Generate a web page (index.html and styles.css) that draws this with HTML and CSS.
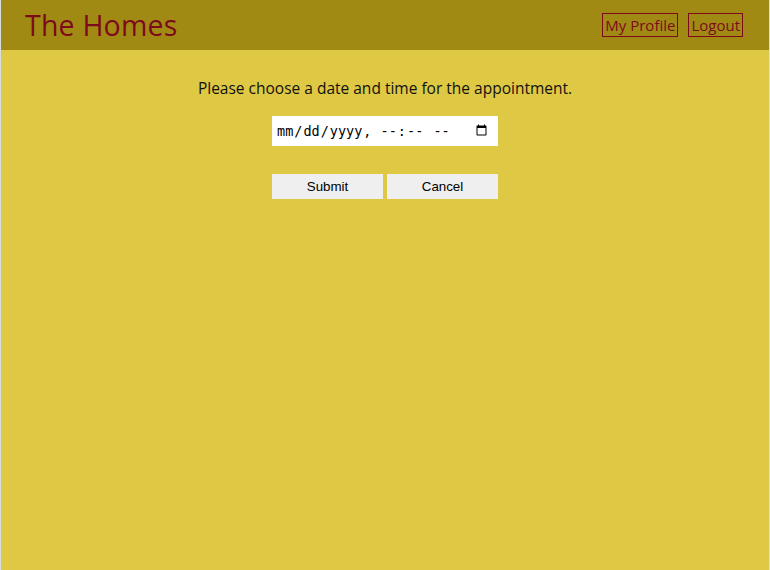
FILE: index.html
```html
<!DOCTYPE html>
<html>
<head>
<meta charset="utf-8">
<link rel="stylesheet" href="styles.css">
</head>
<body>
<div class="page">
  <header class="topbar">
    <h1 class="brand">The Homes</h1>
    <nav class="nav">
      <a class="nav-link" href="#">My Profile</a>
      <a class="nav-link" href="#">Logout</a>
    </nav>
  </header>
  <main class="content">
    <p class="prompt">Please choose a date and time for the appointment.</p>
    <form class="form">
      <input class="dt" type="datetime-local">
      <div class="actions">
        <button class="btn" type="button">Submit</button>
        <button class="btn" type="button">Cancel</button>
      </div>
    </form>
  </main>
</div>
</body>
</html>
```
FILE: styles.css
```css
html, body {
  margin: 0;
  padding: 0;
  height: 100%;
}
body {
  background: #d9dde2;
  font-family: "Open Sans", "DejaVu Sans", sans-serif;
}
.page {
  margin: 0 1px;
  min-height: 100%;
  background: #dfc843;
  display: flex;
  flex-direction: column;
}
.topbar {
  height: 50px;
  background: #a08a14;
  display: flex;
  align-items: center;
  justify-content: space-between;
  padding: 0 26px 0 24px;
  box-sizing: border-box;
}
.brand {
  margin: 0;
  font-weight: 400;
  font-size: 28.5px;
  color: #7d0a1a;
  letter-spacing: 0.2px;
}
.nav {
  display: flex;
  gap: 10px;
}
.nav-link {
  color: #7d0a1a;
  text-decoration: none;
  border: 1px solid #7d0a1a;
  font-size: 15px;
  line-height: 22px;
  padding: 0 2px;
}
.content {
  display: flex;
  flex-direction: column;
  align-items: center;
}
.prompt {
  margin: 28px 0 0;
  font-size: 15.5px;
  line-height: 20px;
  color: #111;
}
.form {
  display: flex;
  flex-direction: column;
  align-items: center;
  margin-top: 18px;
}
.dt {
  width: 226px;
  height: 30px;
  box-sizing: border-box;
  border: none;
  background: #fff;
  font-family: "DejaVu Sans Mono", monospace;
  font-size: 13.5px;
  padding: 0 8px 0 4px;
}
.actions {
  display: flex;
  gap: 4px;
  margin-top: 28px;
}
.btn {
  width: 111px;
  height: 25px;
  border: none;
  background: #efefef;
  font-family: "Liberation Sans", Arial, sans-serif;
  font-size: 13.33px;
  color: #000;
}
```
